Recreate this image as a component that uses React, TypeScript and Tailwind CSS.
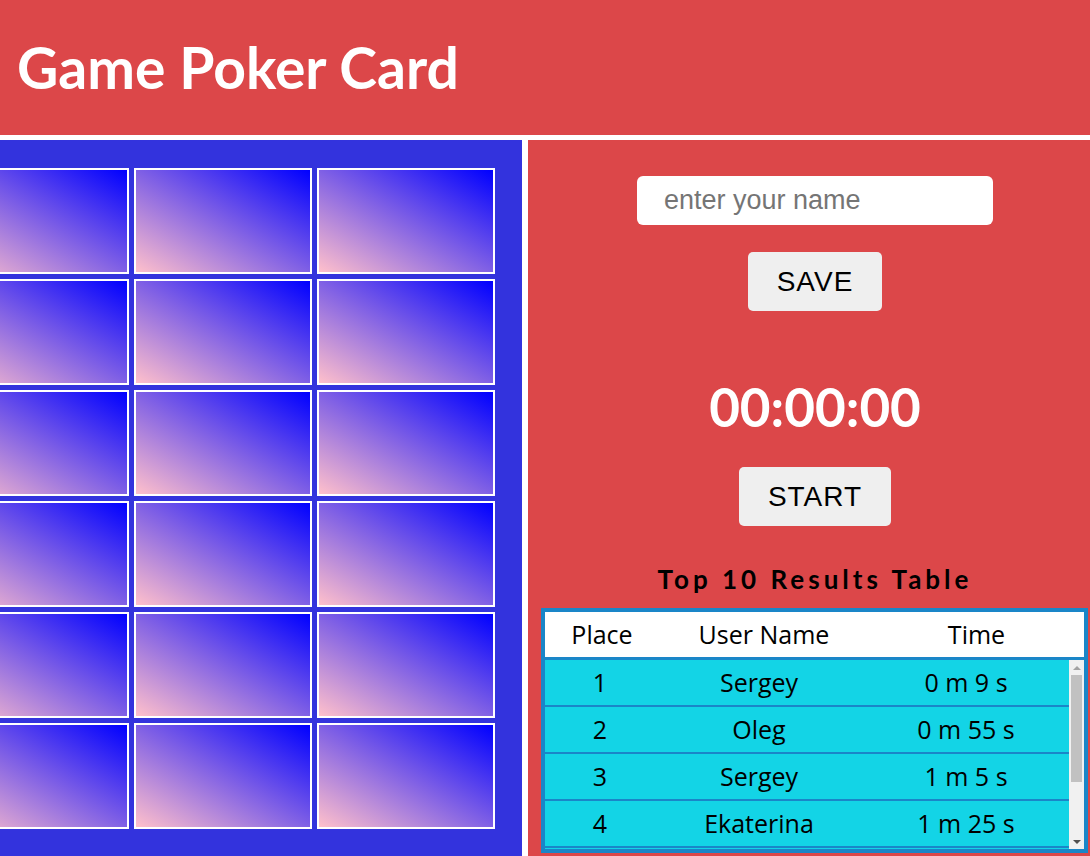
import React from 'react';

const results = [
  { place: 1, name: 'Sergey', time: '0 m 9 s' },
  { place: 2, name: 'Oleg', time: '0 m 55 s' },
  { place: 3, name: 'Sergey', time: '1 m 5 s' },
  { place: 4, name: 'Ekaterina', time: '1 m 25 s' },
];

const cards = Array.from({ length: 18 }, (_, i) => i);

const Card = () => (
  <div className="w-[178px] h-[106px] border-2 border-white bg-[linear-gradient(to_top_right,#ffc0cb,#0000ff)]" />
);

// classic scrollbar look (headless hides the real one)
const ScrollBar = () => (
  <div className="w-[15px] shrink-0 bg-[#f1f1f1] flex flex-col items-center">
    <div className="h-[15px] w-full flex items-center justify-center">
      <svg width="8" height="4" viewBox="0 0 8 4">
        <path d="M0 4 L4 0 L8 4 Z" fill="#a3a3a3" />
      </svg>
    </div>
    <div className="w-[11px] h-[107px] bg-[#c1c1c1]" />
    <div className="flex-1" />
    <div className="h-[15px] w-full flex items-center justify-center">
      <svg width="8" height="4" viewBox="0 0 8 4">
        <path d="M0 0 L8 0 L4 4 Z" fill="#505050" />
      </svg>
    </div>
  </div>
);

const App = () => {
  return (
    <div className="w-[1090px] h-[856px] overflow-hidden bg-white font-['Lato',sans-serif]">
      {/* шапка */}
      <header className="h-[135px] bg-[#dc4749] flex items-center pl-[17px]">
        <h1 className="text-[57px] font-bold text-white leading-none">Game Poker Card</h1>
      </header>

      <main className="flex mt-[5px] h-[716px] gap-[6px]">
        {/* игровое поле */}
        <section className="w-[522px] shrink-0 bg-[#3333dd] overflow-hidden flex justify-end pt-[28px] pr-[27px]">
          <div className="grid grid-cols-[repeat(3,178px)] gap-x-[5px] gap-y-[5px] h-fit shrink-0">
            {cards.map((c) => (
              <Card key={c} />
            ))}
          </div>
        </section>

        {/* панель управления */}
        <section className="flex-1 bg-[#dc4749] flex flex-col">
          <div className="flex flex-col items-center pl-[12px]">
            <input
              type="text"
              placeholder="enter your name"
              className="mt-[36px] w-[356px] h-[49px] rounded-md bg-white pl-[27px] text-[27px] font-['Liberation_Sans',Arial,sans-serif] placeholder:text-[#757575] outline-none"
            />
            <button className="mt-[27px] h-[59px] px-[29px] rounded-[5px] bg-[#efefef] text-black text-[28px] tracking-[1px] font-['Liberation_Sans',Arial,sans-serif]">
              SAVE
            </button>
            <div className="mt-[69px] text-[53px] leading-none font-bold text-white">00:00:00</div>
            <button className="mt-[34px] h-[59px] px-[29px] rounded-[5px] bg-[#efefef] text-black text-[28px] tracking-[1px] font-['Liberation_Sans',Arial,sans-serif]">
              START
            </button>
            <h2 className="mt-[40px] text-[26px] leading-none font-bold tracking-[4px] text-black">
              Top 10 Results Table
            </h2>
          </div>

          <div className="mt-[16px] ml-[13px] w-[547px] border-4 border-[#1a86c8] text-[25px] text-black font-['Open_Sans',sans-serif]">
            <div className="grid grid-cols-[114px_210px_1fr] h-[48px] bg-white border-b-[3px] border-[#1a86c8]">
              <div className="flex items-center justify-center">Place</div>
              <div className="flex items-center justify-center">User Name</div>
              <div className="flex items-center justify-center">Time</div>
            </div>
            <div className="h-[189px] flex bg-[#13d4e6]">
              <div className="flex-1 overflow-hidden">
                {results.map((r) => (
                  <div
                    key={r.place}
                    className="grid grid-cols-[110px_208px_1fr] h-[47px] border-b-2 border-[#1a86c8]"
                  >
                    <div className="flex items-center justify-center">{r.place}</div>
                    <div className="flex items-center justify-center">{r.name}</div>
                    <div className="flex items-center justify-center">{r.time}</div>
                  </div>
                ))}
              </div>
              <ScrollBar />
            </div>
          </div>
        </section>
      </main>
    </div>
  );
};

export default App;
